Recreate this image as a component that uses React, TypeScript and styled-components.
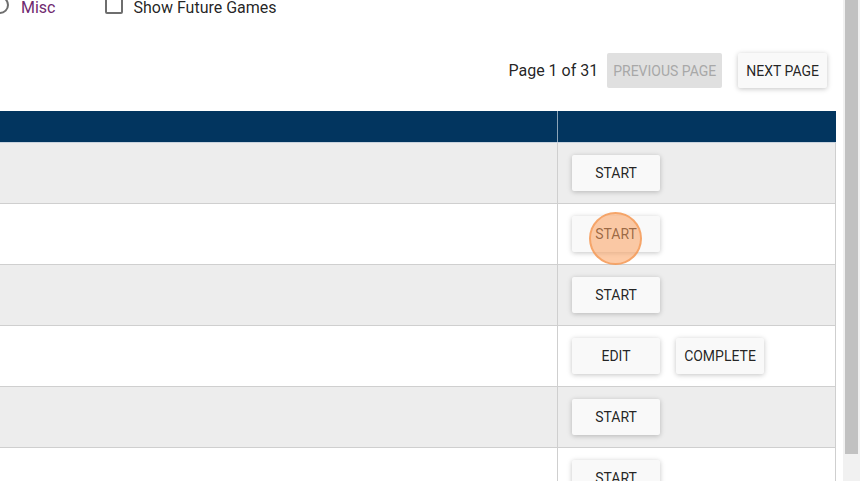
import React from "react";
import styled, { createGlobalStyle } from "styled-components";

const GlobalStyle = createGlobalStyle`
  html, body { margin: 0; padding: 0; background: #ffffff; overflow: hidden; }
  body { font-family: Roboto, "Liberation Sans", sans-serif; color: rgba(0,0,0,0.87); }
  * { box-sizing: border-box; }
`;

const Page = styled.div`
  display: flex;
  width: 860px;
  height: 481px;
  overflow: hidden;
`;

const Main = styled.div`
  flex: 1;
  min-width: 0;
  display: flex;
  flex-direction: column;
  overflow: hidden;
`;

const ScrollTrack = styled.div`
  width: 17px;
  flex: none;
  background: #f1f1f1;
  padding: 0 2px;
`;

const ScrollThumb = styled.div`
  height: 454px;
  background: #c1c1c1;
`;

const FilterRow = styled.div`
  display: flex;
  align-items: center;
  height: 18px;
  margin-top: -4px;
  margin-left: -9px;
`;

const Option = styled.label<{ $gap: number }>`
  display: flex;
  align-items: center;
  gap: ${(p) => p.$gap}px;
  margin-right: 49px;
`;

const Radio = styled.span`
  width: 18px;
  height: 18px;
  border: 2px solid #6e6e6e;
  border-radius: 50%;
  flex: none;
`;

const Checkbox = styled.span`
  width: 18px;
  height: 18px;
  border: 2px solid #6e6e6e;
  border-radius: 2px;
  flex: none;
`;

const OptionText = styled.span<{ $accent?: boolean }>`
  font-size: 16px;
  line-height: 18px;
  padding-top: 6px;
  color: ${(p) => (p.$accent ? "#6f2a6f" : "rgba(0,0,0,0.87)")};
`;

const Pager = styled.div`
  display: flex;
  justify-content: flex-end;
  align-items: center;
  margin-top: 39px;
  padding-right: 16px;
  height: 35px;
`;

const PageInfo = styled.span`
  font-size: 16px;
  margin-right: 9px;
  color: rgba(0,0,0,0.87);
`;

const Button = styled.button<{ $disabled?: boolean; $h?: number }>`
  position: relative;
  min-width: 88px;
  height: ${(p) => p.$h ?? 36}px;
  padding: 0 8px;
  border: none;
  border-radius: 2px;
  font-family: Roboto, "Liberation Sans", sans-serif;
  font-size: 14px;
  font-weight: 400;
  text-transform: uppercase;
  background: ${(p) => (p.$disabled ? "#e0e0e0" : "#f9f9f9")};
  color: ${(p) => (p.$disabled ? "#a8a8a8" : "rgba(0,0,0,0.87)")};
  box-shadow: ${(p) =>
    p.$disabled
      ? "none"
      : "0 1px 6px rgba(0,0,0,0.12), 0 1px 4px rgba(0,0,0,0.12)"};
  cursor: pointer;
`;

const PrevButton = styled(Button)`
  padding: 0 6px;
  margin-right: 16px;
`;

const Table = styled.div`
  margin-top: 23px;
  width: 836px;
  display: flex;
  flex-direction: column;
`;

const HeaderRow = styled.div`
  display: grid;
  grid-template-columns: 558px 278px;
  height: 32px;
  background: #02355f;
  border-bottom: 1px solid #c9d3de;
`;

const HeaderCell = styled.div`
  border-right: 1px solid rgba(255,255,255,0.55);
  &:last-child { border-right: none; }
`;

const Row = styled.div<{ $alt: boolean }>`
  display: grid;
  grid-template-columns: 558px 278px;
  height: 61px;
  flex: none;
  background: ${(p) => (p.$alt ? "#ededed" : "#ffffff")};
  border-bottom: 1px solid #cfcfcf;
`;

const Cell = styled.div`
  border-right: 1px solid #cfcfcf;
`;

const ActionCell = styled(Cell)`
  display: flex;
  align-items: center;
  gap: 16px;
  padding-left: 14px;
`;

const Touch = styled.span`
  position: absolute;
  left: 17px;
  top: -4px;
  width: 53px;
  height: 53px;
  border-radius: 50%;
  background: rgba(252, 160, 95, 0.55);
  border: 2px solid rgba(244, 150, 80, 0.7);
  pointer-events: none;
`;

const rows: { actions: string[]; touch?: boolean }[] = [
  { actions: ["Start"] },
  { actions: ["Start"], touch: true },
  { actions: ["Start"] },
  { actions: ["Edit", "Complete"] },
  { actions: ["Start"] },
  { actions: ["Start"] },
];

export default function App() {
  return (
    <>
      <GlobalStyle />
      <Page>
        <Main>
          <FilterRow>
            <Option $gap={12}>
              <Radio />
              <OptionText $accent>Misc</OptionText>
            </Option>
            <Option $gap={11}>
              <Checkbox />
              <OptionText>Show Future Games</OptionText>
            </Option>
          </FilterRow>
          <Pager>
            <PageInfo>Page 1 of 31</PageInfo>
            <PrevButton $disabled $h={35}>Previous Page</PrevButton>
            <Button $h={35}>Next Page</Button>
          </Pager>
          <Table>
            <HeaderRow>
              <HeaderCell />
              <HeaderCell />
            </HeaderRow>
            {rows.map((r, i) => (
              <Row key={i} $alt={i % 2 === 0}>
                <Cell />
                <ActionCell>
                  {r.actions.map((a) => (
                    <Button key={a}>
                      {a}
                      {r.touch && <Touch />}
                    </Button>
                  ))}
                </ActionCell>
              </Row>
            ))}
          </Table>
        </Main>
        <ScrollTrack>
          <ScrollThumb />
        </ScrollTrack>
      </Page>
    </>
  );
}
